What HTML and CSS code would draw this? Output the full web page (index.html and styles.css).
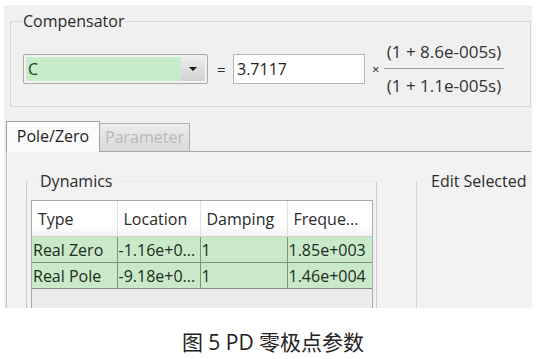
FILE: index.html
```html
<!DOCTYPE html>
<html>
<head>
<meta charset="utf-8">
<link rel="stylesheet" href="styles.css">
</head>
<body>
<div class="window">
  <fieldset class="group comp">
    <legend>Compensator</legend>
    <div class="comp-row">
      <div class="combo">
        <div class="combo-field">C</div>
        <div class="combo-btn"><span class="arrow"></span></div>
      </div>
      <span class="eq">=</span>
      <div class="gain">3.7117</div>
      <span class="times">×</span>
      <div class="frac">
        <div class="num">(1 + 8.6e-005s)</div>
        <div class="den">(1 + 1.1e-005s)</div>
      </div>
    </div>
  </fieldset>

  <div class="tabs">
    <div class="tab active">Pole/Zero</div>
    <div class="tab disabled">Parameter</div>
  </div>
  <div class="panel">
    <fieldset class="group dyn">
      <legend>Dynamics</legend>
      <div class="grid">
        <table>
          <colgroup><col class="c1"><col class="c2"><col class="c3"><col class="c4"></colgroup>
          <thead>
            <tr><th>Type</th><th>Location</th><th>Damping</th><th>Freque...</th></tr>
          </thead>
          <tbody>
            <tr><td>Real Zero</td><td>-1.16e+0...</td><td>1</td><td>1.85e+003</td></tr>
            <tr><td>Real Pole</td><td>-9.18e+0...</td><td>1</td><td>1.46e+004</td></tr>
          </tbody>
        </table>
      </div>
    </fieldset>
    <fieldset class="group edit">
      <legend>Edit Selected</legend>
    </fieldset>
  </div>
</div>
<div class="caption">图 5 PD 零极点参数</div>
</body>
</html>
```
FILE: styles.css
```css
html, body {
  margin: 0;
  padding: 0;
  background: #ffffff;
}
body {
  font-family: "Open Sans", "DejaVu Sans", sans-serif;
  font-size: 16px;
  color: #2a2a2a;
}
.window {
  margin: 5px 0 0 4px;
  width: 528px;
  height: 303px;
  background: #f0f0f0;
  overflow: hidden;
}
.group {
  margin: 0;
  min-width: 0;
  border: 1px solid #d6d6d6;
}
.group legend {
  padding: 0 1px;
  line-height: 20px;
  height: 20px;
  color: #2b2b2b;
}
.comp {
  margin: 6px 1px 0 6px;
  padding: 10px 11px 9px 11px;
}
.comp-row {
  display: flex;
  align-items: center;
}
.combo {
  margin-left: 1px;
  width: 185px;
  height: 30px;
  box-sizing: border-box;
  border: 1px solid #a9a9a9;
  border-radius: 2px;
  background: #f2f2f2;
  padding: 2px;
  display: flex;
}
.combo-field {
  flex: 1;
  background: #c8ecca;
  line-height: 24px;
  padding-left: 2px;
  color: #1f3a22;
}
.combo-btn {
  width: 24px;
  background: linear-gradient(#ececec, #d2d2d2);
  display: flex;
  align-items: center;
  justify-content: center;
}
.arrow {
  width: 0;
  height: 0;
  border-left: 4px solid transparent;
  border-right: 4px solid transparent;
  border-top: 4px solid #1a1a1a;
}
.eq {
  margin-left: 9px;
  width: 8px;
  font-size: 15px;
}
.gain {
  margin-left: 8px;
  width: 132px;
  height: 30px;
  box-sizing: border-box;
  border: 1px solid #b4b4b4;
  background: #ffffff;
  line-height: 28px;
  padding-left: 3px;
  color: #222;
}
.times {
  margin-left: 7px;
  font-size: 13px;
  width: 8px;
}
.frac {
  margin-left: 4px;
  width: 120px;
  text-align: center;
  font-size: 17px;
  color: #333;
}
.num {
  line-height: 22px;
  padding-bottom: 5px;
  border-bottom: 1px solid #9a9a9a;
}
.den {
  line-height: 22px;
  padding-top: 6px;
}
.tabs {
  margin: 14px 1px 0 2px;
  display: flex;
  align-items: flex-end;
  height: 30px;
  border-bottom: 1px solid #a8a8a8;
}
.tab {
  box-sizing: border-box;
  text-align: center;
}
.tab.active {
  width: 94px;
  height: 31px;
  margin-bottom: -1px;
  border: 1px solid #a0a0a0;
  border-bottom: none;
  background: #fbfbfb;
  line-height: 28px;
  color: #1e1e1e;
}
.tab.disabled {
  width: 90px;
  height: 28px;
  border: 1px solid #b0b0b0;
  border-left: none;
  border-bottom: none;
  background: linear-gradient(#ececec, #d9d9d9);
  line-height: 27px;
  color: #b9b9b9;
}
.panel {
  margin: 0 1px 0 2px;
  height: 200px;
  border-left: 1px solid #c4c4c4;
  background: #f2f2f2;
  display: flex;
  align-items: flex-start;
  overflow: hidden;
}
.dyn {
  margin: 19px 0 0 19px;
  padding: 9px 3px 0 4px;
  width: 351px;
  flex-shrink: 0;
  box-sizing: border-box;
  height: 200px;
  border-color: #c8c8c8;
  border-top-color: #ebebeb;
}
.edit {
  margin: 19px 0 0 39px;
  padding: 0 0 0 12px;
  width: 150px;
  flex-shrink: 0;
  box-sizing: border-box;
  height: 200px;
  border-color: #d4d4d4;
  border-top-color: #ebebeb;
}
.edit legend {
  margin-left: 1px;
}
.dyn legend {
  margin-left: 8px;
}
.grid {
  width: 342px;
  height: 120px;
  box-sizing: border-box;
  border: 1px solid #a8a8a8;
  border-bottom: none;
  background: #ececec;
}
table {
  width: 340px;
  table-layout: fixed;
  border-collapse: collapse;
  font-size: 16px;
}
col.c1 { width: 85px; }
col.c2 { width: 83px; }
col.c3 { width: 87px; }
col.c4 { width: 85px; }
th {
  height: 35px;
  padding: 0 0 0 6px;
  text-align: left;
  font-weight: normal;
  color: #2a2a2a;
  background: linear-gradient(#ffffff 70%, #f3f3f3);
  border-left: 1px solid #e2e2e2;
  border-bottom: 1px solid #d0d0d0;
  white-space: nowrap;
  overflow: hidden;
}
th:first-child { border-left: none; }
td {
  height: 25px;
  padding: 0 0 0 1px;
  background: #c8eac8;
  border: 1px solid #7f907f;
  color: #1c2c1c;
  white-space: nowrap;
  overflow: hidden;
}
td:first-child { border-left: none; }
td:last-child { border-right: none; }
.caption {
  margin-top: 19px;
  text-align: center;
  padding-left: 8px;
  font-family: "Open Sans", "Noto Sans CJK SC", sans-serif;
  font-size: 21px;
  line-height: 30px;
  color: #222;
}
```
